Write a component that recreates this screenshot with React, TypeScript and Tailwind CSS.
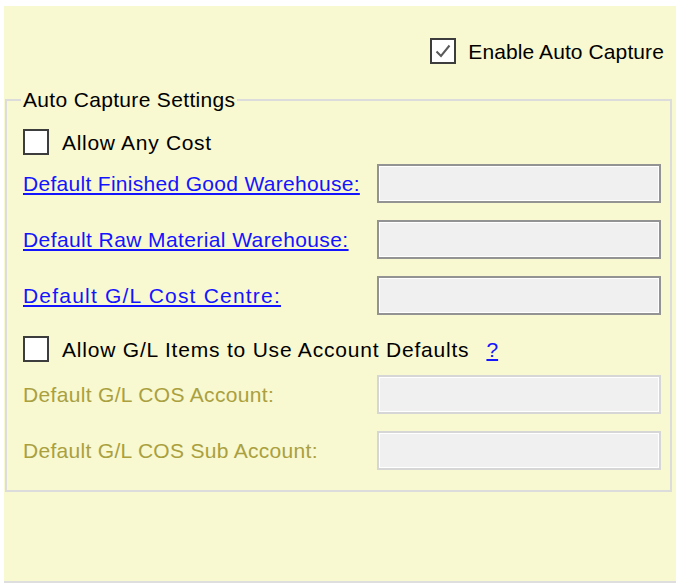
import React from "react";

// Classic WinForms-style checkbox: square box with dark border, optional tick
function CheckBox({ checked = false }: { checked?: boolean }) {
  return (
    <span className="flex h-[26px] w-[26px] shrink-0 items-center justify-center border-2 border-[#3d3d3d] bg-white">
      {checked && (
        <svg width="18" height="18" viewBox="0 0 18 18" fill="none">
          <path d="M2.5 9.5 L7 14 L15.5 3.5" stroke="#5a5a5a" strokeWidth="2" />
        </svg>
      )}
    </span>
  );
}

// Sunken text box, greyed out when the field is disabled
function TextBox({ disabled = false }: { disabled?: boolean }) {
  return (
    <div
      className={
        disabled
          ? "h-[39px] w-[284px] border-2 border-[#d6d6d6] bg-[#f0f0f0] shadow-[inset_0_0_0_1px_#ffffff]"
          : "h-[39px] w-[284px] border-2 border-[#939393] bg-[#f0f0f0] shadow-[inset_0_0_0_1px_#ffffff]"
      }
    />
  );
}

function FieldRow({
  label,
  link = false,
  disabled = false,
  className = "",
  textClass = "",
}: {
  label: string;
  link?: boolean;
  disabled?: boolean;
  className?: string;
  textClass?: string;
}) {
  return (
    <div className={"flex items-center justify-between " + className}>
      {link ? (
        <a href="#" className={"text-[#1414ff] underline underline-offset-2 " + textClass}>
          {label}
        </a>
      ) : (
        <span className={(disabled ? "text-[#aaa03e] " : "text-black ") + textClass}>{label}</span>
      )}
      <TextBox disabled={disabled} />
    </div>
  );
}

export default function App() {
  return (
    <div className="h-[585px] w-[676px] bg-white pl-[4px] pt-[6px] font-['Liberation_Sans',Arial,sans-serif] text-[21px] leading-none text-black">
      <div className="flex h-[577px] flex-col border-b-2 border-[#dedede] bg-[#f8f8d1]">
        {/* master switch */}
        <label className="mr-[12px] mt-[32px] flex items-center justify-end gap-[12px]">
          <CheckBox checked />
          <span className="tracking-[0.1px]">Enable Auto Capture</span>
        </label>

        <fieldset className="ml-[1px] mr-[4px] mt-[24px] border-2 border-[#dcdcdc] pb-[20px] pl-[14px] pr-[9px]">
          <legend className="px-[2px] leading-[24px] tracking-[0.33px]">Auto Capture Settings</legend>

          <div className="flex flex-col pl-[2px] pt-[17px]">
            <label className="flex items-center gap-[13px]">
              <CheckBox />
              <span className="tracking-[0.7px]">Allow Any Cost</span>
            </label>

            <FieldRow className="mt-[9px]" textClass="tracking-[0.3px]" link label="Default Finished Good Warehouse:" />
            <FieldRow className="mt-[17px]" textClass="tracking-[0.4px]" link label="Default Raw Material Warehouse:" />
            <FieldRow className="mt-[17px]" textClass="tracking-[1.2px]" link label="Default G/L Cost Centre:" />

            <label className="mt-[21px] flex items-center gap-[13px]">
              <CheckBox />
              <span className="tracking-[0.8px]">Allow G/L Items to Use Account Defaults</span>
              <a href="#" className="ml-[4px] text-[#1414ff] underline underline-offset-2">
                ?
              </a>
            </label>

            <FieldRow className="mt-[13px]" textClass="tracking-[0.33px]" disabled label="Default G/L COS Account:" />
            <FieldRow className="mt-[17px]" textClass="tracking-[0.3px]" disabled label="Default G/L COS Sub Account:" />
          </div>
        </fieldset>
      </div>
    </div>
  );
}
